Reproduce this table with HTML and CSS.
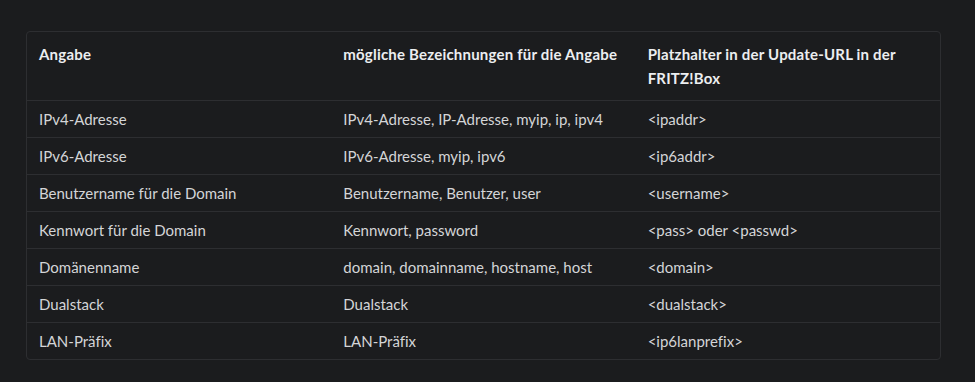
FILE: index.html
```html
<!DOCTYPE html>
<html>
<head>
    <title>Dynamic DNS Platzhalter</title>
    <link rel="stylesheet" href="styles.css">
</head>
<body>
    <div class="table-wrap">
        <table class="info-table">
            <thead>
                <tr>
                    <th>Angabe</th>
                    <th>mögliche Bezeichnungen für die Angabe</th>
                    <th>Platzhalter in der Update-URL in der FRITZ!Box</th>
                </tr>
            </thead>
            <tbody>
                <tr>
                    <td>IPv4-Adresse</td>
                    <td>IPv4-Adresse, IP-Adresse, myip, ip, ipv4</td>
                    <td>&lt;ipaddr&gt;</td>
                </tr>
                <tr>
                    <td>IPv6-Adresse</td>
                    <td>IPv6-Adresse, myip, ipv6</td>
                    <td>&lt;ip6addr&gt;</td>
                </tr>
                <tr>
                    <td>Benutzername für die Domain</td>
                    <td>Benutzername, Benutzer, user</td>
                    <td>&lt;username&gt;</td>
                </tr>
                <tr>
                    <td>Kennwort für die Domain</td>
                    <td>Kennwort, password</td>
                    <td>&lt;pass&gt; oder &lt;passwd&gt;</td>
                </tr>
                <tr>
                    <td>Domänenname</td>
                    <td>domain, domainname, hostname, host</td>
                    <td>&lt;domain&gt;</td>
                </tr>
                <tr>
                    <td>Dualstack</td>
                    <td>Dualstack</td>
                    <td>&lt;dualstack&gt;</td>
                </tr>
                <tr>
                    <td>LAN-Präfix</td>
                    <td>LAN-Präfix</td>
                    <td>&lt;ip6lanprefix&gt;</td>
                </tr>
            </tbody>
        </table>
    </div>
</body>
</html>
```

FILE: styles.css
```css
body {
    font-family: Lato, "Noto Sans", sans-serif;
    font-size: 15px;
    font-variant-ligatures: none;
    margin: 0;
    padding: 31px 34px 0 26px;
    background: #1b1c1e;
    color: #d4d5d7;
}
.table-wrap {
    border: 1px solid #2d2e31;
    border-radius: 4px;
    overflow: hidden;
}
.info-table {
    width: 100%;
    border-collapse: collapse;
    table-layout: fixed;
}
.info-table th,
.info-table td {
    text-align: left;
    vertical-align: top;
    line-height: 24px;
    padding: 6px 12px;
}
.info-table th {
    font-weight: 700;
    letter-spacing: 0.2px;
    color: #eceef0;
    padding-top: 10px;
    padding-bottom: 10px;
}
.info-table tr + tr td,
.info-table tbody tr:first-child td {
    border-top: 1px solid #2d2e31;
}
```
